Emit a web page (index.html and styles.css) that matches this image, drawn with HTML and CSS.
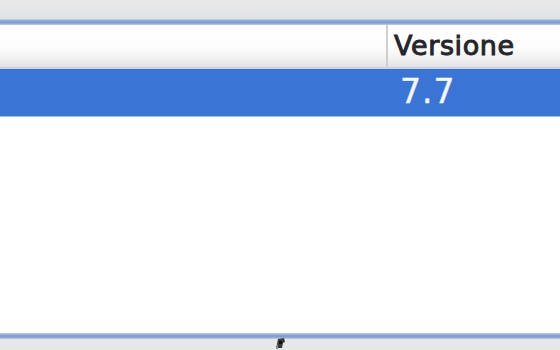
FILE: index.html
```html
<!DOCTYPE html>
<html>
<head>
<meta charset="utf-8">
<link rel="stylesheet" href="styles.css">
</head>
<body>
<div class="window">
  <div class="topbar"></div>
  <div class="edge"></div>
  <div class="table">
    <div class="header">
      <div class="col col-name"></div>
      <div class="col col-version">Versione</div>
    </div>
    <div class="row selected">
      <div class="cell cell-name"></div>
      <div class="cell cell-version">7.7</div>
    </div>
    <div class="body"></div>
  </div>
  <div class="edge"></div>
  <div class="bottombar">
    <svg class="grip" width="14" height="13" viewBox="0 0 14 13">
      <path d="M4 2 L10 1 L11 5 L9 6 L8 11 L4 11 L3 7 Z" fill="#3a3a3a"/>
      <path d="M5 4 L8 4 L8 7 L5 7 Z" fill="#111"/>
      <path d="M2 8 L4 8 L4 12 L2 12 Z" fill="#8a8a8a"/>
    </svg>
  </div>
</div>
</body>
</html>
```

FILE: styles.css
```css
html, body {
  margin: 0;
  padding: 0;
  background: #e8e9ea;
}
.window {
  width: 560px;
  height: 350px;
  display: flex;
  flex-direction: column;
  font-family: "DejaVu Sans", sans-serif;
  overflow: hidden;
}
.topbar {
  height: 19px;
  background: linear-gradient(#e9e9e9, #e2e3e5);
}
.edge {
  height: 6px;
  background: linear-gradient(#c5d3ea 0, #87a4d2 35%, #7f9ecf 65%, #c3d0e8 100%);
  flex: none;
}
.table {
  flex: 1;
  display: flex;
  flex-direction: column;
  background: #fff;
}
.header {
  height: 42px;
  display: flex;
  background: linear-gradient(#ffffff 0, #fdfdfd 55%, #eeeeee 85%, #e2e2e2 100%);
  border-bottom: 2px solid #c9d3e4;
}
.col {
  display: flex;
  align-items: flex-end;
  padding-bottom: 6px;
  box-sizing: border-box;
}
.col-name {
  width: 388px;
  border-right: 2px solid #cfcfcf;
}
.col-version {
  flex: 1;
  padding-left: 6px;
  font-size: 27px;
  letter-spacing: 0.6px;
  color: #25252b;
  -webkit-text-stroke: 0.9px #25252b;
  text-shadow: 0 0 1px rgba(0,0,0,0.3);
}
.row {
  height: 47px;
  display: flex;
}
.selected {
  background: #3a75d5;
  border-bottom: 1px solid #9fbbe6;
}
.cell {
  display: flex;
  align-items: flex-end;
  padding-bottom: 5px;
}
.cell-name {
  width: 390px;
}
.cell-version {
  flex: 1;
  padding-left: 10px;
  font-size: 33px;
  color: #f4f7ff;
  letter-spacing: 1px;
  -webkit-text-stroke: 0.4px #f4f7ff;
}
.body {
  flex: 1;
  background: #fff;
}
.bottombar {
  height: 11px;
  flex: none;
  background: #e6e7e9;
  display: flex;
  justify-content: center;
  padding-left: 2px;
  overflow: visible;
}
.grip {
  margin-top: -2px;
  filter: blur(0.6px);
}
```
